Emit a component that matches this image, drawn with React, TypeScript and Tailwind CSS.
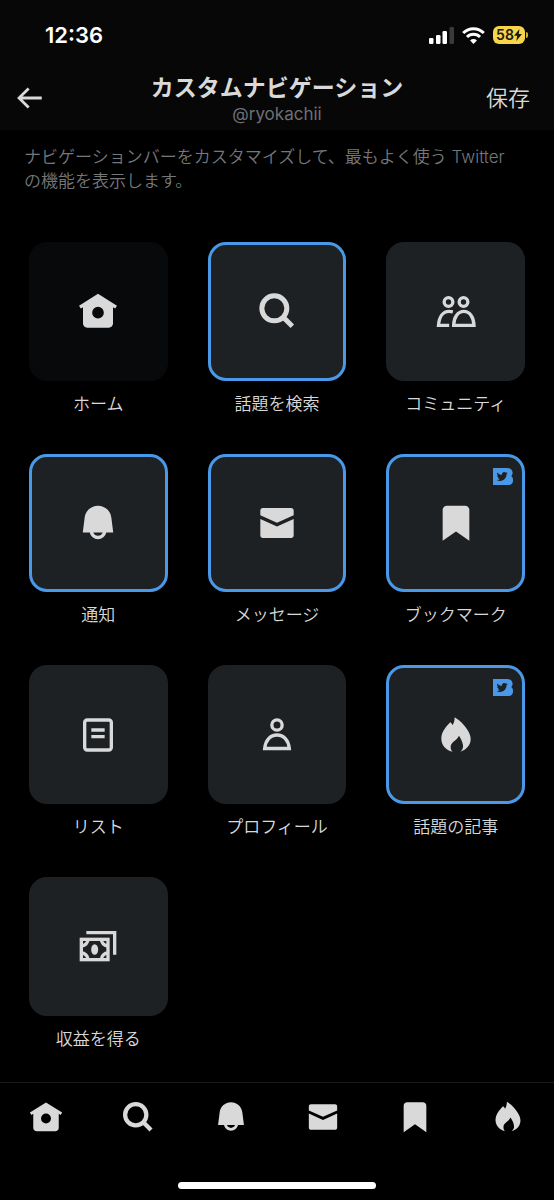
import React, { useState } from 'react';

type IconProps = { className?: string };

const HomeIcon = ({ className }: IconProps) => (
  <svg viewBox="0 0 24 24" fill="currentColor" className={className} aria-hidden="true">
    <path
      fillRule="evenodd"
      d="M12 1.7L.62 8.81l1.06 1.69L3 9.68V19.5C3 20.88 4.12 22 5.5 22h13c1.38 0 2.5-1.12 2.5-2.5V9.68l1.32.82 1.06-1.69L12 1.7zm0 14.8a3.5 3.5 0 110-7 3.5 3.5 0 010 7z"
    />
  </svg>
);

const SearchIcon = ({ className }: IconProps) => (
  <svg viewBox="0 0 24 24" fill="none" stroke="currentColor" className={className} aria-hidden="true">
    <circle cx="10.4" cy="10.4" r="7.5" strokeWidth="3" />
    <path d="M15.6 15.6l5.600 5.600" strokeWidth="3" />
  </svg>
);

const CommunityIcon = ({ className }: IconProps) => (
  <svg viewBox="0 0 24 24" fill="none" stroke="currentColor" strokeWidth="2" className={className} aria-hidden="true">
    <circle cx="7.5" cy="6.6" r="2.6" />
    <circle cx="16.5" cy="6.6" r="2.6" />
    <path d="M10.6 20.6c.1-5 2.6-8.4 6.1-8.4s5.9 3.4 6.1 8.4z" />
    <path d="M10.1 12.5c-.8-.2-1.5-.3-2.2-.3-3.6 0-6 3.1-6.4 8.4h6.4" />
  </svg>
);

const BellIcon = ({ className }: IconProps) => (
  <svg viewBox="0 0 24 24" fill="currentColor" className={className} aria-hidden="true">
    <path
      fillRule="evenodd"
      d="M12 1.6c-4.06 0-7.49 3.02-8 7.05L2.87 17.7H7.1c.46 2.28 2.48 4 4.9 4s4.44-1.72 4.9-4h4.24L19.99 8.64C19.48 4.62 16.05 1.6 12 1.6zM9.17 17.7h5.66c-.41 1.16-1.52 2-2.83 2s-2.42-.84-2.83-2z"
    />
  </svg>
);

const MailIcon = ({ className }: IconProps) => (
  <svg viewBox="0 0 24 24" fill="currentColor" className={className} aria-hidden="true">
    <path d="M2 4.5C2 3.67 2.67 3 3.5 3h17c.83 0 1.5.67 1.5 1.5v2.86L12 11.9 2 7.36V4.5zm0 5.05v9.95c0 .83.67 1.5 1.5 1.5h17c.83 0 1.5-.67 1.5-1.5V9.55L12 14.1 2 9.55z" />
  </svg>
);

const BookmarkIcon = ({ className }: IconProps) => (
  <svg viewBox="0 0 24 24" fill="currentColor" className={className} aria-hidden="true">
    <path d="M4 4c0-1.38 1.12-2.4 2.5-2.4h11C18.88 1.6 20 2.62 20 4v18.7l-8-5.6-8 5.6V4z" />
  </svg>
);

const ListIcon = ({ className }: IconProps) => (
  <svg viewBox="0 0 24 24" fill="none" stroke="currentColor" strokeWidth="2" className={className} aria-hidden="true">
    <rect x="4" y="3" width="16" height="18" rx="1.5" />
    <path d="M8 9h8M8 13h8" />
  </svg>
);

const ProfileIcon = ({ className }: IconProps) => (
  <svg viewBox="0 0 24 24" fill="none" stroke="currentColor" strokeWidth="2" className={className} aria-hidden="true">
    <circle cx="12" cy="6" r="3.1" />
    <path d="M4.600 20.100c.5-5 3.400-8.100 7.400-8.100s6.900 3.100 7.400 8.100z" />
  </svg>
);

const FlameIcon = ({ className }: IconProps) => (
  <svg viewBox="0 0 24 24" fill="currentColor" className={className} aria-hidden="true">
    <path d="M11.2 1.3C13 2.4 14.4 3.5 15.6 4.8C18 7.4 20.8 11 20.8 14.4C20.8 18 18.4 20.8 14.6 22C16 20.8 16.4 19.6 16.2 18C15.9 16 14.900 14.200 13.800 12.400C13.200 13.800 12.100 14.700 11 15.600C9.500 16.800 8.700 17.800 8.800 19.400C8.800 20.400 9.200 21.300 9.900 22.100C5.800 21 3.200 18 3.200 14.200C3.200 10.400 5.600 7.400 8.500 4.400C9.200 4.800 9.600 5.400 9.900 6.200C10.800 4.800 11.200 3.200 11.200 1.300z" />
  </svg>
);

const MoneyIcon = ({ className }: IconProps) => (
  <svg viewBox="0 0 24 24" fill="none" stroke="currentColor" strokeWidth="2" className={className} aria-hidden="true">
    <path d="M5 4h17v13.2" />
    <rect x="2" y="8" width="16" height="12.2" />
    <path d="M6 8a4 4 0 01-4 4M14 8a4 4 0 004 4M6 20.2a4 4 0 00-4-4M14 20.2a4 4 0 014-4" />
    <ellipse cx="10" cy="14.1" rx="2.1" ry="3.2" fill="currentColor" stroke="none" />
  </svg>
);

const BlueBadge = ({ className }: IconProps) => (
  <svg viewBox="0 0 20 17" className={className} role="img" aria-label="Twitter Blue">
    <path
      fill="#4a99e9"
      d="M0 0h14c3.200 0 5.600 2 5.600 4.700 0 1.400-.5 2.500-1.400 3.300 1.100.8 1.800 2 1.800 3.500v1.300c0 2.500-1.700 4.200-4.300 4.200H0z"
    />
    <path
      fill="#1d2124"
      transform="translate(3.6 3) scale(.46)"
      d="M23.95 4.57a10 10 0 01-2.82.78 4.96 4.96 0 002.16-2.72c-.95.55-2 .96-3.13 1.18a4.92 4.92 0 00-8.38 4.48C7.69 8.1 4.07 6.13 1.64 3.16a4.82 4.82 0 00-.67 2.48c0 1.71.87 3.21 2.19 4.1a4.9 4.9 0 01-2.23-.62v.06a4.92 4.92 0 003.95 4.83 5 5 0 01-2.21.08 4.94 4.94 0 004.6 3.42A9.87 9.87 0 010 19.54a14 14 0 007.55 2.21c9.05 0 14-7.5 14-13.98 0-.21 0-.42-.02-.63a9.94 9.94 0 002.46-2.55z"
    />
  </svg>
);

const BackIcon = ({ className }: IconProps) => (
  <svg viewBox="0 0 24 24" fill="currentColor" className={className} aria-hidden="true">
    <path d="M7.41 13l5.05 5.04-1.42 1.42L3.59 12l7.45-7.46 1.42 1.42L7.41 11H21v2H7.41z" />
  </svg>
);

interface NavItem {
  id: string;
  label: string;
  Icon: (props: IconProps) => React.ReactElement;
  locked?: boolean;
  blue?: boolean;
}

const navItems: NavItem[] = [
  { id: 'home', label: 'ホーム', Icon: HomeIcon, locked: true },
  { id: 'explore', label: '話題を検索', Icon: SearchIcon },
  { id: 'communities', label: 'コミュニティ', Icon: CommunityIcon },
  { id: 'notifications', label: '通知', Icon: BellIcon },
  { id: 'messages', label: 'メッセージ', Icon: MailIcon },
  { id: 'bookmarks', label: 'ブックマーク', Icon: BookmarkIcon, blue: true },
  { id: 'lists', label: 'リスト', Icon: ListIcon },
  { id: 'profile', label: 'プロフィール', Icon: ProfileIcon },
  { id: 'topArticles', label: '話題の記事', Icon: FlameIcon, blue: true },
  { id: 'monetization', label: '収益を得る', Icon: MoneyIcon },
];

function StatusBar() {
  return (
    <div className="flex h-[70px] items-center justify-between pl-[45px] pr-[26px] text-white">
      <span className="text-[22px] font-semibold leading-7">12:36</span>
      <div className="flex items-center gap-2">
        <svg viewBox="0 0 25 17" className="h-[17px] w-[25px]" fill="currentColor" aria-hidden="true">
          <rect x="0" y="11" width="4.500" height="6" rx="1.200" />
          <rect x="7" y="8" width="4.500" height="9" rx="1.200" />
          <rect x="13.500" y="4" width="4.500" height="13" rx="1.200" />
          <rect x="20.500" y="0" width="4.500" height="17" rx="1.200" fill="#3a3a3a" />
        </svg>
        <svg viewBox="0 0 23 17" className="h-[17px] w-[23px]" fill="none" stroke="currentColor" strokeWidth="3" aria-hidden="true">
          <path d="M1.200 6a14.600 14.600 0 0120.600 0" />
          <path d="M5 10a9.200 9.200 0 0113 0" />
          <path d="M11.500 17l-3.400-3.500a4.800 4.800 0 016.800 0z" fill="currentColor" stroke="none" />
        </svg>
        <div className="flex items-center gap-px">
          <div className="flex h-[18px] w-8 items-center justify-center rounded-[6px] bg-[#f7d54a] text-[#1a1a10]">
            <span className="text-[14px] font-semibold leading-4">58</span>
            <svg viewBox="0 0 8 12" className="h-3 w-2" fill="currentColor" aria-hidden="true">
              <path d="M5.500 0L0 6.800h3.200L2.300 12 8 5H4.700z" />
            </svg>
          </div>
          <span className="h-1.5 w-0.5 rounded-r-full bg-[#c9ad3e]" />
        </div>
      </div>
    </div>
  );
}

export default function App() {
  const [selected, setSelected] = useState<string[]>([
    'explore',
    'notifications',
    'messages',
    'bookmarks',
    'topArticles',
  ]);

  const toggle = (id: string) => {
    setSelected((prev) => (prev.includes(id) ? prev.filter((x) => x !== id) : [...prev, id]));
  };

  const tabs = navItems.filter((item) => item.locked || selected.includes(item.id));

  return (
    <div
      lang="ja"
      className="flex min-h-screen flex-col bg-black font-['Inter','Noto_Sans_CJK_JP',sans-serif] text-[#d9d9d9]"
    >
      {/* Header */}
      <header className="bg-[#070707]">
        <StatusBar />
        <div className="grid h-[60px] grid-cols-[1fr_auto_1fr] items-center px-3">
          <button type="button" aria-label="戻る" className="justify-self-start pb-1">
            <BackIcon className="size-[34px]" />
          </button>
          <div className="text-center">
            <h1 className="text-[23px] font-bold leading-7">カスタムナビゲーション</h1>
            <p className="text-[17px] leading-6 text-[#6e7072]">@ryokachii</p>
          </div>
          <button type="button" className="justify-self-end pb-1 pr-3 text-[22px] font-[350] leading-7">
            保存
          </button>
        </div>
      </header>

      <main className="flex-1 pb-6 pt-[15px]">
        <p className="pl-6 pr-9 text-[17px] font-[350] leading-6 text-[#75787b]">
          ナビゲーションバーをカスタマイズして、最もよく使う Twitter の機能を表示します。
        </p>

        {/* Selectable tiles */}
        <div className="mt-[49px] grid grid-cols-3 gap-x-10 gap-y-[38px] px-[29px]">
          {navItems.map(({ id, label, Icon, locked, blue }) => {
            const active = selected.includes(id);
            return (
              <button
                key={id}
                type="button"
                disabled={locked}
                aria-pressed={locked || active}
                onClick={() => toggle(id)}
                className="flex flex-col items-center gap-[11px]"
              >
                <span
                  className={`relative flex aspect-square w-full items-center justify-center rounded-[18px] border-[3px] ${
                    locked
                      ? 'border-[#08090a] bg-[#08090a]'
                      : active
                        ? 'border-[#4a99e9] bg-[#1d2124]'
                        : 'border-[#1d2124] bg-[#1d2124]'
                  }`}
                >
                  <Icon className="size-10" />
                  {blue && <BlueBadge className="absolute right-[9px] top-[11px] h-[17px] w-5" />}
                </span>
                <span className="whitespace-nowrap text-[17px] font-[350] leading-6">{label}</span>
              </button>
            );
          })}
        </div>
      </main>

      {/* Tab bar preview */}
      <footer className="sticky bottom-0 border-t border-[#1a1a1a] bg-black">
        <nav className="flex h-[68px] items-center" aria-label="ナビゲーションバー">
          {tabs.map(({ id, label, Icon }) => (
            <a key={id} href={`#${id}`} aria-label={label} className="flex flex-1 justify-center">
              <Icon className="size-[34px]" />
            </a>
          ))}
        </nav>
        <div className="flex h-[49px] items-end justify-center pb-[11px]">
          <div className="h-[7px] w-[198px] rounded-full bg-white" />
        </div>
      </footer>
    </div>
  );
}
